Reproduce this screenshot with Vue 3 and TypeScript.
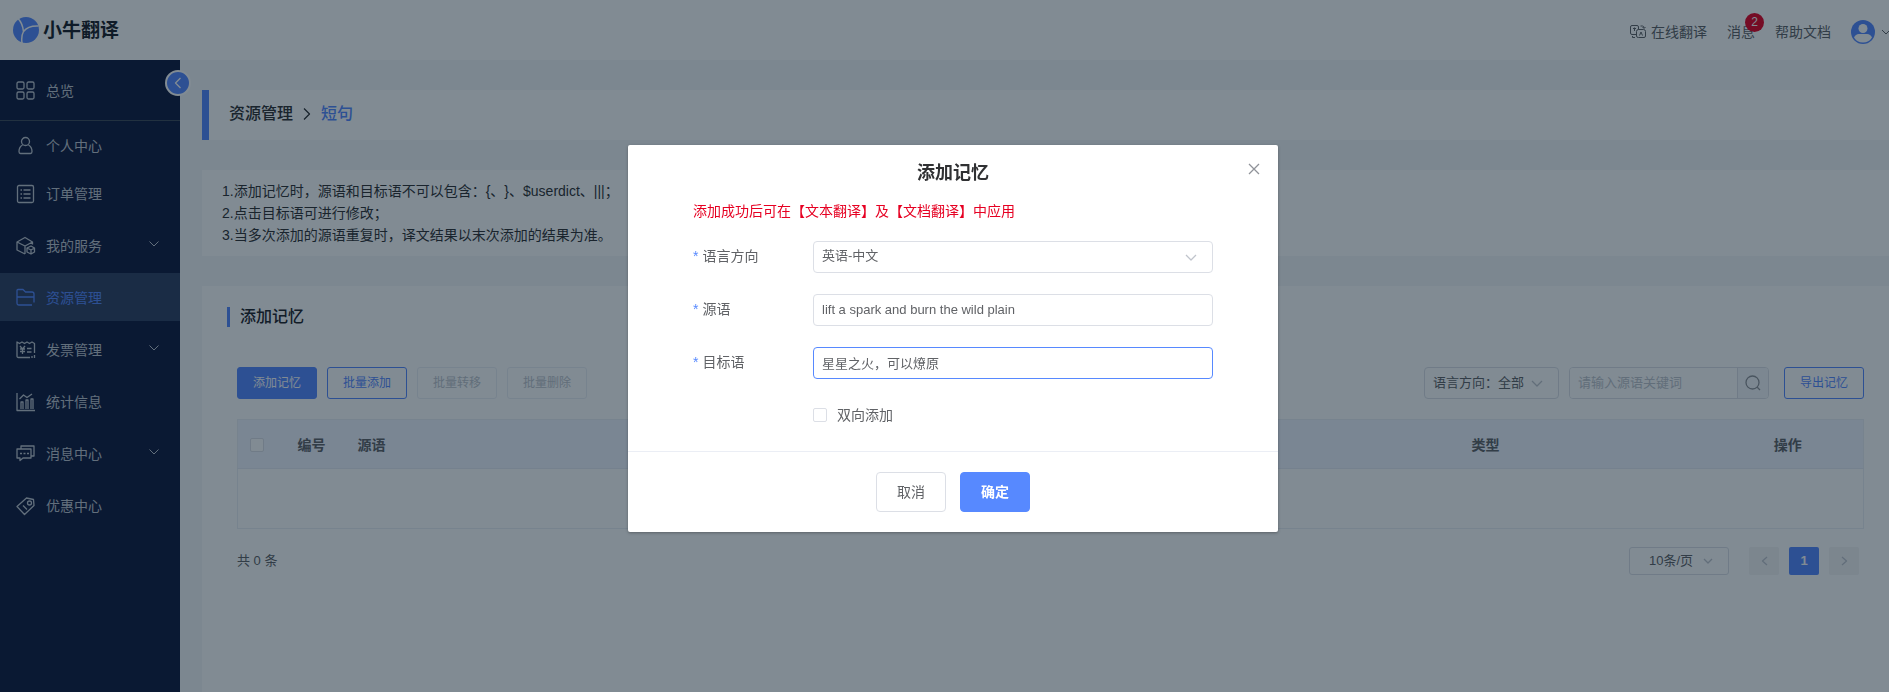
<script setup lang="ts">
import { ref } from 'vue'

interface NavItem { label: string; icon: string; height: number; arrow?: boolean; active?: boolean; divided?: boolean }

const nav: NavItem[] = [
  { label: '总览', icon: 'grid', height: 61, divided: true },
  { label: '个人中心', icon: 'user', height: 48 },
  { label: '订单管理', icon: 'list', height: 48 },
  { label: '我的服务', icon: 'box', height: 56, arrow: true },
  { label: '资源管理', icon: 'folder', height: 48, active: true },
  { label: '发票管理', icon: 'invoice', height: 56, arrow: true },
  { label: '统计信息', icon: 'chart', height: 48 },
  { label: '消息中心', icon: 'chat', height: 56, arrow: true },
  { label: '优惠中心', icon: 'tag', height: 48 },
]

const notes = [
  '1.添加记忆时，源语和目标语不可以包含：{、}、$userdict、|||；',
  '2.点击目标语可进行修改；',
  '3.当多次添加的源语重复时，译文结果以末次添加的结果为准。',
]

const source = ref('lift a spark and burn the wild plain')
const target = ref('星星之火，可以燎原')
const both = ref(false)
const keyword = ref('')
</script>

<template>
  <div class="app">
    <header class="top">
      <a class="brand" href="#">
        <svg width="26" height="26" viewBox="0 0 26 26">
          <circle cx="13" cy="13" r="13" fill="#5789ff" />
          <path d="M5 1.500Q9.500 6 10.500 14.500Q15 8.500 25.500 9M10.500 14.500Q8 19 9 26" fill="none" stroke="#fff" stroke-width="1.5" />
        </svg>
        <span>小牛翻译</span>
      </a>
      <nav class="toplinks">
        <a href="#" class="translate">
          <svg class="line thin" width="16" height="14" viewBox="0 0 16 14">
            <path d="M6.500 9.500H2Q.5 9.500.5 8V2Q.5.5 2 .5H7Q8.500.5 8.500 2V4.500M10.500 1H12.500Q14 1 14 3M12.500 2L14 3.500L15.500 2M8.500 4.500H13.500Q15.500 4.500 15.500 6.500V11Q15.500 12.500 14 12.500H8.500Q6.500 12.500 6.500 11V6.500Q6.500 4.500 8.500 4.500M2.500 11V12.500H5M3 3.500H6M4.500 2.500V6M9.500 10.500L11 7L12.500 10.500" />
          </svg>
          <span>在线翻译</span>
        </a>
        <a href="#" class="message">消息<i class="badge">2</i></a>
        <a href="#">帮助文档</a>
        <button class="account" aria-label="账户">
          <svg width="24" height="24" viewBox="0 0 24 24">
            <circle cx="12" cy="12" r="12" fill="#5789ff" />
            <circle cx="12" cy="8.500" r="4.500" fill="#fff" />
            <path d="M3 17.500Q4.500 14 8 14H16Q19.500 14 21 17.500Q18 22.500 12 22.500T3 17.500Z" fill="#fff" />
          </svg>
          <svg class="line thin" width="10" height="6" viewBox="0 0 10 6"><path d="M1 1L5 5L9 1" /></svg>
        </button>
      </nav>
    </header>

    <div class="body">
      <aside class="side">
        <a v-for="n in nav" :key="n.label" href="#" class="item" :class="{ active: n.active, divided: n.divided }" :style="{ height: n.height + 'px' }">
          <svg class="line" width="20" height="20" viewBox="0 0 20 20">
            <g v-if="n.icon === 'grid'"><rect x="1" y="1" width="7" height="7" rx="1.500" /><rect x="11" y="1" width="7" height="7" rx="1.500" /><rect x="1" y="11" width="7" height="7" rx="1.500" /><rect x="11" y="11" width="7" height="7" rx="1.500" /></g>
            <g v-else-if="n.icon === 'user'"><circle cx="9.500" cy="5.500" r="4" /><path d="M6.500 9Q3 11 3 15.500Q3 17.500 4.500 17.500H14.500Q16 17.500 16 15.500Q16 11 12.500 9" /></g>
            <g v-else-if="n.icon === 'list'"><rect x="1.500" y="1.500" width="16" height="17" rx="1.500" /><path d="M4.500 6H6M4.500 10H6M4.500 14H6M7.500 6H14.500M7.500 10H14.500M7.500 14H14.500" /></g>
            <g v-else-if="n.icon === 'box'"><path d="M9 18L1 14V6L9 1.500L16.500 6V8.500M1 6L9 10L16.500 6M9 10V18M11 12L15 10L18.500 12V16L15 18L11 16ZM11 12L15 14L18.500 12M15 14V18" /></g>
            <g v-else-if="n.icon === 'folder'"><path d="M16 17H3Q1 17 1 15V2.500Q1 1.500 2 1.500H7L9.500 4H16Q18 4 18 6V14.500M1 9H18" /></g>
            <g v-else-if="n.icon === 'invoice'"><path d="M14 17.500H2.500Q1 17.500 1 16V2L3.500 3.500L6 2L8.500 3.500L11 2L13.500 3.500L16 2L18.500 3.500V13M18.500 15V18M16 16V18M4 6L6.500 9L9 6M4 9H9M4 11.500H9M6.500 9V14M11 8.500H15.500M11 12H15.500" /></g>
            <g v-else-if="n.icon === 'chart'"><path d="M1 1V18.500H19M5 17V10H7V17M10 17V8H12V17M15 17V7H17V17M3.500 7L7.500 3L11 5.500L16 2" /></g>
            <g v-else-if="n.icon === 'chat'"><path d="M5 4.500V2H18V12H15.500M1 5H15V14H7L4 16.500V14H1ZM4 9.500H6M7.500 9.500H9.500M11 9.500H13" /></g>
            <g v-else><path d="M1 10.500L10.500 2L17.500 3.500L18 9.500L8.500 18.500ZM7 9.500L11 13.500" /><circle cx="13.500" cy="7" r="2" /></g>
          </svg>
          <span>{{ n.label }}</span>
          <svg v-if="n.arrow" class="line thin arrow" width="10" height="6" viewBox="0 0 10 6"><path d="M.5.5L5 5L9.500.5" /></svg>
        </a>
        <button class="collapse" aria-label="收起菜单">
          <svg class="line" width="8" height="12" viewBox="0 0 8 12"><path d="M6.500 1L1.500 6L6.500 11" /></svg>
        </button>
      </aside>

      <main class="main">
        <div class="crumb">
          <span>资源管理</span>
          <svg class="line" width="8" height="14" viewBox="0 0 8 14"><path d="M1 1.500L6.500 7L1 12.500" /></svg>
          <b>短句</b>
        </div>
        <div class="notes"><p v-for="t in notes" :key="t">{{ t }}</p></div>
        <section class="panel">
          <h2>添加记忆</h2>
          <div class="panelbody">
            <div class="tools">
              <button class="btn primary">添加记忆</button>
              <button class="btn outline">批量添加</button>
              <button class="btn" disabled>批量转移</button>
              <button class="btn" disabled>批量删除</button>
              <span class="spacer"></span>
              <div class="selectbox filter">
                <select aria-label="语言方向"><option>语言方向：全部</option></select>
                <svg class="line" width="12" height="7" viewBox="0 0 12 7"><path d="M1 1L6 6L11 1" /></svg>
              </div>
              <div class="search">
                <input v-model="keyword" placeholder="请输入源语关键词" aria-label="源语关键词">
                <button aria-label="搜索">
                  <svg class="line" width="16" height="16" viewBox="0 0 16 16"><circle cx="7.500" cy="7.500" r="6.500" /><path d="M12 12L15 15" /></svg>
                </button>
              </div>
              <button class="btn outline">导出记忆</button>
            </div>
            <table>
              <thead>
                <tr>
                  <th class="c1"><input type="checkbox" aria-label="全选"></th>
                  <th class="c2">编号</th>
                  <th class="c3">源语</th>
                  <th class="c4">类型</th>
                  <th class="c5">操作</th>
                </tr>
              </thead>
              <tbody><tr><td colspan="5"></td></tr></tbody>
            </table>
            <div class="pager">
              <span class="total">共 0 条</span>
              <div class="selectbox size">
                <select aria-label="每页条数"><option>10条/页</option></select>
                <svg class="line" width="10" height="6" viewBox="0 0 10 6"><path d="M1 1L5 5L9 1" /></svg>
              </div>
              <button class="page" disabled aria-label="上一页"><svg class="line" width="7" height="10" viewBox="0 0 7 10"><path d="M6 1L1.500 5L6 9" /></svg></button>
              <button class="page current">1</button>
              <button class="page" disabled aria-label="下一页"><svg class="line" width="7" height="10" viewBox="0 0 7 10"><path d="M1 1L5.500 5L1 9" /></svg></button>
            </div>
          </div>
        </section>
      </main>
    </div>

    <div class="mask">
      <form class="dialog" role="dialog" aria-labelledby="dialog-title" @submit.prevent>
        <button type="button" class="close" aria-label="关闭"><svg class="line" width="12" height="12" viewBox="0 0 12 12"><path d="M1 1L11 11M11 1L1 11" /></svg></button>
        <h1 id="dialog-title">添加记忆</h1>
        <div class="fields">
          <p class="tip">添加成功后可在【文本翻译】及【文档翻译】中应用</p>
          <div class="field">
            <label for="direction"><i>*</i>语言方向</label>
            <div class="selectbox wide">
              <select id="direction"><option>英语-中文</option></select>
              <svg class="line" width="12" height="7" viewBox="0 0 12 7"><path d="M1 1L6 6L11 1" /></svg>
            </div>
          </div>
          <div class="field">
            <label for="source"><i>*</i>源语</label>
            <input id="source" v-model="source" class="text">
          </div>
          <div class="field">
            <label for="target"><i>*</i>目标语</label>
            <input id="target" v-model="target" class="text focused">
          </div>
          <div class="field last">
            <label class="check"><input v-model="both" type="checkbox">双向添加</label>
          </div>
        </div>
        <footer>
          <button type="button" class="action">取消</button>
          <button type="submit" class="action ok">确定</button>
        </footer>
      </form>
    </div>
  </div>
</template>

<style>
body { margin: 0; }
</style>

<style scoped>
* { box-sizing: border-box; }
.app { position: relative; display: flex; flex-direction: column; min-height: 100vh; overflow: hidden; background: #f5f6f8; color: #606266; font: 14px/22px "Liberation Sans", "Noto Sans CJK SC", sans-serif; text-spacing-trim: space-all; }
button, input, select { font: inherit; color: inherit; margin: 0; }
button { display: inline-flex; align-items: center; justify-content: center; padding: 0; background: none; border: 0; cursor: pointer; }
a { color: inherit; text-decoration: none; }
i { font-style: normal; }
p, h1, h2 { margin: 0; }
svg { display: block; flex: none; }
.line { fill: none; stroke: currentColor; stroke-width: 1.3; stroke-linejoin: round; }
.thin { stroke-width: 1; }

.top { display: flex; align-items: center; justify-content: space-between; height: 60px; padding-left: 13px; background: #fff; }
.brand { display: flex; align-items: center; gap: 4px; color: #1b1f28; font-size: 19px; font-weight: 700; }
.brand span { padding-top: 2px; }
.toplinks { display: flex; align-items: center; gap: 20px; padding-top: 4px; }
.translate { display: flex; align-items: center; gap: 5px; }
.message { position: relative; }
.badge { position: absolute; left: 18px; top: -8px; width: 19px; height: 19px; border-radius: 10px; background: #e60022; color: #fff; font-size: 12px; line-height: 19px; text-align: center; }
.account { gap: 6px; margin-right: -2px; }

.body { display: flex; flex: 1; }
.side { position: relative; flex: none; width: 180px; background: #111b3f; color: #c0c6d0; }
.item { display: flex; align-items: center; gap: 10px; padding: 2px 21px 0 16px; }
.item.divided { border-bottom: 1px solid #404b59; }
.item.active { background: #314163; color: #5789ff; }
.arrow { margin: 0 0 4px auto; }
.collapse { position: absolute; right: -11px; top: 10px; width: 26px; height: 26px; border: 2px solid #fff; border-radius: 13px; background: #5789ff; color: #fff; }

.main { flex: 1; min-width: 0; display: flex; flex-direction: column; gap: 30px; padding: 30px 0 0 22px; }
.crumb { display: flex; align-items: center; gap: 10px; height: 50px; padding: 0 0 2px 20px; border-left: 7px solid #5789ff; background: #fff; color: #303133; font-size: 16px; font-weight: 500; }
.crumb b { color: #5789ff; font-weight: 500; }
.notes { padding: 10px 20px; background: #fff; color: #303133; }
.panel { flex: 1; padding: 21px 25px 0; background: #fff; }
h2 { padding-left: 10px; border-left: 3px solid #5789ff; color: #1f2329; font-size: 16px; line-height: 20px; font-weight: 500; }
.panelbody { padding: 40px 0 0 10px; }
.tools { display: flex; align-items: center; gap: 10px; margin-bottom: 20px; }
.spacer { flex: 1; }
.btn { width: 80px; height: 32px; border: 1px solid #ebeef5; border-radius: 3px; font-size: 12px; }
.btn:disabled { color: #c0c4cc; }
.btn.primary { background: #5789ff; border-color: #5789ff; color: #fff; }
.btn.outline { border-color: #5789ff; color: #5789ff; }
.selectbox { position: relative; font-size: 13px; }
select { appearance: none; width: 100%; height: 100%; padding: 0 8px; border: 1px solid #dcdfe6; border-radius: 4px; background: #fff; outline: 0; }
.selectbox svg { position: absolute; right: 16px; top: 50%; margin-top: -3px; color: #c0c4cc; pointer-events: none; }
.filter { width: 135px; height: 32px; }
.search { display: flex; width: 200px; height: 32px; margin-right: 5px; border: 1px solid #dcdfe6; border-radius: 4px; font-size: 13px; overflow: hidden; }
.search input { flex: 1; min-width: 0; padding: 0 8px; border: 0; outline: 0; background: #fff; }
.search input::placeholder { color: #c0c4cc; opacity: 1; }
.search button { width: 31px; border-left: 1px solid #dcdfe6; background: #f5f7fa; color: #909399; }

table { width: 100%; table-layout: fixed; border-collapse: collapse; border: 1px solid #ebeef5; }
th { height: 49px; padding: 2px 0 0; border-bottom: 1px solid #e6ebf5; background: #f0f4ff; font-weight: 700; text-align: left; }
td { height: 60px; padding: 0; }
.c1 { width: 60px; padding-left: 12px; }
.c2 { width: 60px; }
.c4, .c5 { text-align: center; }
.c4 { width: 454px; }
.c5 { width: 151px; }
input[type="checkbox"] { appearance: none; display: block; flex: none; width: 14px; height: 14px; border: 1px solid #dcdfe6; border-radius: 2px; background: #fff; }

.pager { display: flex; align-items: center; gap: 10px; padding: 18px 5px 0 0; font-size: 13px; }
.total { margin-right: auto; }
.size { width: 100px; height: 28px; margin-right: 10px; }
.size select { padding-left: 19px; border-radius: 3px; }
.page { width: 30px; height: 28px; border-radius: 2px; background: #f4f4f5; color: #c0c4cc; }
.page.current { background: #5789ff; color: #fff; font-weight: 700; }

.mask { position: fixed; inset: 0; display: flex; align-items: flex-start; justify-content: center; padding: 145px 0 0 17px; background: rgba(3, 23, 39, .5); }
.dialog { position: relative; width: 650px; border-radius: 2px; background: #fff; box-shadow: 0 1px 3px rgba(0, 0, 0, .3); }
.close { position: absolute; right: 17px; top: 17px; width: 14px; height: 14px; color: #909399; }
h1 { padding-top: 16px; color: #303133; font-size: 18px; line-height: 24px; text-align: center; }
.fields { padding: 15px 65px 21px; }
.tip { color: #e60022; margin-bottom: 19px; }
.field { display: flex; align-items: center; height: 32px; margin-bottom: 21px; }
.field > label { flex: none; width: 120px; padding-bottom: 2px; }
.field i { margin-right: 4px; color: #5789ff; }
.wide { flex: 1; height: 32px; }
.wide select { padding-bottom: 2px; }
.text { flex: 1; min-width: 0; height: 32px; padding: 0 8px 2px; border: 1px solid #dcdfe6; border-radius: 4px; outline: 0; font-size: 13px; }
.text.focused { border-color: #5789ff; }
.field.last { height: 30px; margin-bottom: 0; padding-left: 120px; }
.field > .check { display: flex; align-items: center; gap: 10px; padding-bottom: 0; }
footer { display: flex; justify-content: center; gap: 14px; padding: 20px; border-top: 1px solid #ebeef5; }
.action { width: 70px; height: 40px; border: 1px solid #dcdfe6; border-radius: 4px; }
.action.ok { border-color: #5789ff; background: #5789ff; color: #fff; font-weight: 700; }
</style>
